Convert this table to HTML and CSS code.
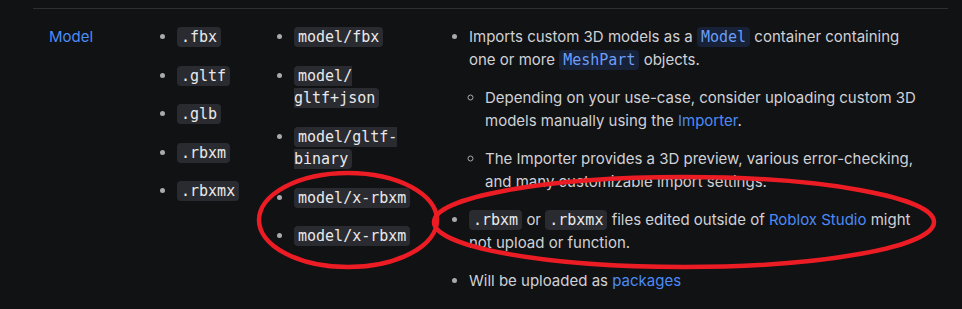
FILE: index.html
```html
<!DOCTYPE html>
<html lang="en">
<head>
  <meta charset="UTF-8" />
  <meta name="viewport" content="width=device-width, initial-scale=1.0"/>
  <title>Asset types - Model</title>
  <link rel="stylesheet" href="styles.css">
</head>
<body>
  <div class="page">
    <table class="asset-table">
      <tr>
        <td class="col-type"><a href="#">Model</a></td>
        <td class="col-ext">
          <ul class="list">
            <li><code>.fbx</code></li>
            <li><code>.gltf</code></li>
            <li><code>.glb</code></li>
            <li><code>.rbxm</code></li>
            <li><code>.rbxmx</code></li>
          </ul>
        </td>
        <td class="col-mime">
          <ul class="list">
            <li><code>model/fbx</code></li>
            <li><code>model/<wbr>gltf+json</code></li>
            <li><code>model/gltf-<wbr>binary</code></li>
            <li><code>model/x-rbxm</code></li>
            <li><code>model/x-rbxm</code></li>
          </ul>
        </td>
        <td class="col-notes">
          <ul class="list">
            <li>
              Imports custom 3D models as a <code class="api">Model</code> container containing one or more <code class="api">MeshPart</code> objects.
              <ul class="list sub">
                <li>Depending on your use-case, consider uploading custom 3D models manually using the <a href="#">Importer</a>.</li>
                <li>The Importer provides a 3D preview, various error-checking, and many customizable import settings.</li>
              </ul>
            </li>
            <li><code>.rbxm</code> or <code>.rbxmx</code> files edited outside of <a href="#">Roblox Studio</a> might not upload or function.</li>
            <li>Will be uploaded as <a href="#">packages</a></li>
          </ul>
        </td>
      </tr>
    </table>

    <!-- hand drawn marks on top of the screenshot -->
    <svg class="marks" width="962" height="309" viewBox="0 0 962 309">
      <ellipse cx="348" cy="220" rx="89" ry="47" />
      <ellipse cx="684" cy="222" rx="250" ry="45" />
    </svg>
  </div>
</body>
</html>
```

FILE: styles.css
```css
body {
  margin: 0;
  background: #111214;
  font-family: Inter, "Noto Sans", sans-serif;
  font-size: 15px;
  line-height: 22.5px;
  color: #d0d1d4;
}
.page {
  position: relative;
  height: 309px;
  padding: 8px 0 0 33px;
  box-sizing: border-box;
  overflow: hidden;
}
.asset-table {
  width: 915px;
  border-collapse: collapse;
  table-layout: fixed;
}
.asset-table td {
  border-top: 1px solid #2e2f33;
  padding: 17px 16px;
  vertical-align: top;
}
.col-type {
  width: 84px;
}
.col-ext {
  width: 85px;
}
.col-mime {
  width: 143px;
}
.asset-table td.col-notes {
  padding-right: 23px;
}
a {
  color: #4c8bf5;
  text-decoration: none;
}
.list {
  margin: 0;
  padding-left: 12px;
}
.list li + li {
  margin-top: 16px;
}
.list li::marker {
  color: #a9aaae;
}
.list.sub {
  margin-top: 16px;
  padding-left: 16px;
  list-style: circle;
}
code {
  font-family: "DejaVu Sans Mono", monospace;
  font-size: 15px;
  color: #e9e9eb;
  background: #2a2b30;
  border-radius: 4px;
  padding: 1px 4px;
}
code.api {
  color: #6b9ef6;
  background: #172138;
}
.marks {
  position: absolute;
  left: 0;
  top: 0;
  pointer-events: none;
}
.marks ellipse {
  fill: none;
  stroke: #ec1c24;
  stroke-width: 4.5;
}
```
